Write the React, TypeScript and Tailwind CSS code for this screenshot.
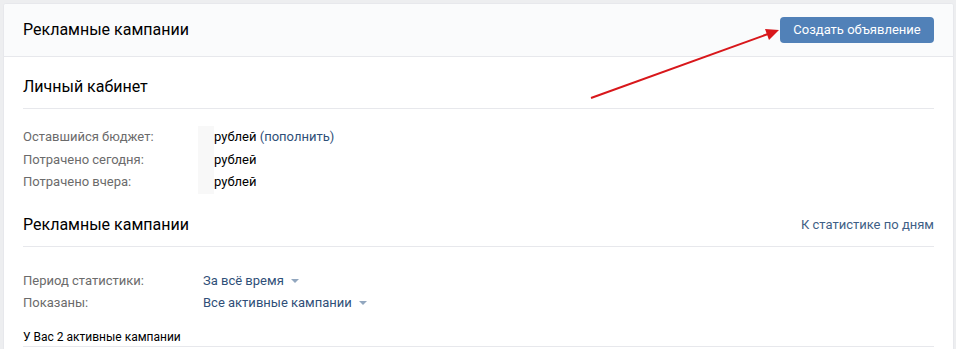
import React from 'react'

const font = { fontFamily: 'Roboto, "Open Sans", Arial, sans-serif' }

function Caret() {
    return (
        <svg width="8" height="5" viewBox="0 0 8 5" className="ml-[7px] mt-[1px]">
            <path d="M0 0 L8 0 L4 4 Z" fill="#92a7bf" />
        </svg>
    )
}

function SectionTitle({ title, link }: { title: string; link?: string }) {
    return (
        <div className="flex items-center justify-between border-b border-[#e7e8ec] pb-[11px]">
            <div className="text-[16px] leading-[20px] text-black">{title}</div>
            {link && <a className="text-[13px] leading-[20px] text-[#3f5f86]">{link}</a>}
        </div>
    )
}

export default function App() {
    const budget = [
        { label: 'Оставшийся бюджет:', extra: true },
        { label: 'Потрачено сегодня:' },
        { label: 'Потрачено вчера:' },
    ]

    return (
        <div className="relative min-h-screen bg-[#edeef0] pl-[3px] pt-[3px]" style={font}>
            <div className="w-[951px] overflow-hidden rounded-t-[3px] border border-[#e7e8ec] bg-white">
                <div className="flex h-[53px] items-center justify-between border-b border-[#e7e8ec] bg-[#fafbfc] pl-[19px] pr-[19px]">
                    <h1 className="text-[16px] leading-[20px] text-black">Рекламные кампании</h1>
                    <button className="h-[26px] w-[154px] rounded-[4px] bg-[#5181b8] text-[13px] leading-[26px] text-white">
                        Создать объявление
                    </button>
                </div>

                <div className="pl-[19px] pr-[19px]">
                    <div className="pt-[20px]">
                        <SectionTitle title="Личный кабинет" />
                    </div>

                    <div className="flex pt-[17px] text-[13px] leading-[22.5px]">
                        <div className="w-[175px] text-[#6b6b6b]">
                            {budget.map((r) => (
                                <div key={r.label}>{r.label}</div>
                            ))}
                        </div>
                        <div className="w-[16px] bg-[#f8f8f8]" />
                        <div className="text-black">
                            {budget.map((r) => (
                                <div key={r.label}>
                                    рублей{r.extra && <span className="text-[#2f4f78]"> (пополнить)</span>}
                                </div>
                            ))}
                        </div>
                    </div>

                    <div className="pt-[21px]">
                        <SectionTitle title="Рекламные кампании" link="К статистике по дням" />
                    </div>

                    <div className="pt-[23px] text-[13px] leading-[22px]">
                        <div className="flex">
                            <div className="w-[180px] text-[#6b6b6b]">Период статистики:</div>
                            <div className="flex items-center text-[#2f4f78]">
                                За всё время
                                <Caret />
                            </div>
                        </div>
                        <div className="flex">
                            <div className="w-[180px] text-[#6b6b6b]">Показаны:</div>
                            <div className="flex items-center text-[#2f4f78]">
                                Все активные кампании
                                <Caret />
                            </div>
                        </div>
                    </div>

                    <div className="mt-[15px] border-b border-[#e7e8ec] pb-[1px] text-[12px] leading-[16px] text-black">
                        У Вас 2 активные кампании
                    </div>
                    <div className="h-[40px]" />
                </div>
            </div>

            <svg className="pointer-events-none absolute left-0 top-0" width="956" height="349">
                <line x1="591" y1="98" x2="768" y2="34" stroke="#d8171b" strokeWidth="2" />
                <path d="M779 30 L765 29 L769 40 Z" fill="#d8171b" />
            </svg>
        </div>
    )
}
